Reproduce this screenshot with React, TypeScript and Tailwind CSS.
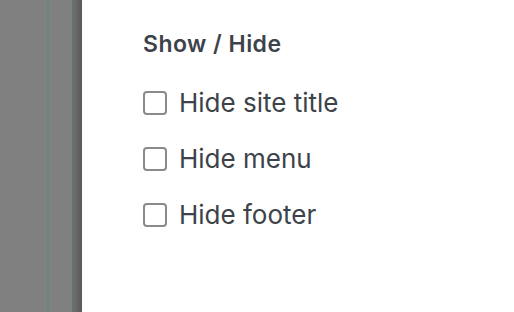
export default function App() {
  const items = ["Hide site title", "Hide menu", "Hide footer"];
  return (
    <div className="flex h-[312px] w-[514px] overflow-hidden bg-white" style={{ fontFamily: "Inter, 'Noto Sans', sans-serif" }}>
      {/* dimmed backdrop */}
      <div className="flex h-full w-[82px] shrink-0 bg-[#808080]">
        <div className="w-[47px]" />
        <div className="w-[2px] bg-[#6a8482]" />
        <div className="w-[23px]" />
        <div className="w-[2px] bg-[#5e7472]" />
        <div className="flex-1 bg-gradient-to-r from-[#6e6e6e] to-[#585858]" />
      </div>

      {/* panel */}
      <div className="flex-1 pl-[61px] pt-[28px]">
        <h3 className="text-[23px] font-semibold leading-[32px] tracking-[0.02em] text-[#3c434a]">Show / Hide</h3>
        <div className="mt-[15px]">
          {items.map((label) => (
            <label key={label} className="flex h-[56px] items-center gap-[12px]">
              <span className="h-[24px] w-[24px] shrink-0 rounded-[4px] border-2 border-[#8a8a8a] bg-white" />
              <span className="text-[26px] leading-[32px] text-[#3c434a]">{label}</span>
            </label>
          ))}
        </div>
      </div>
    </div>
  );
}
